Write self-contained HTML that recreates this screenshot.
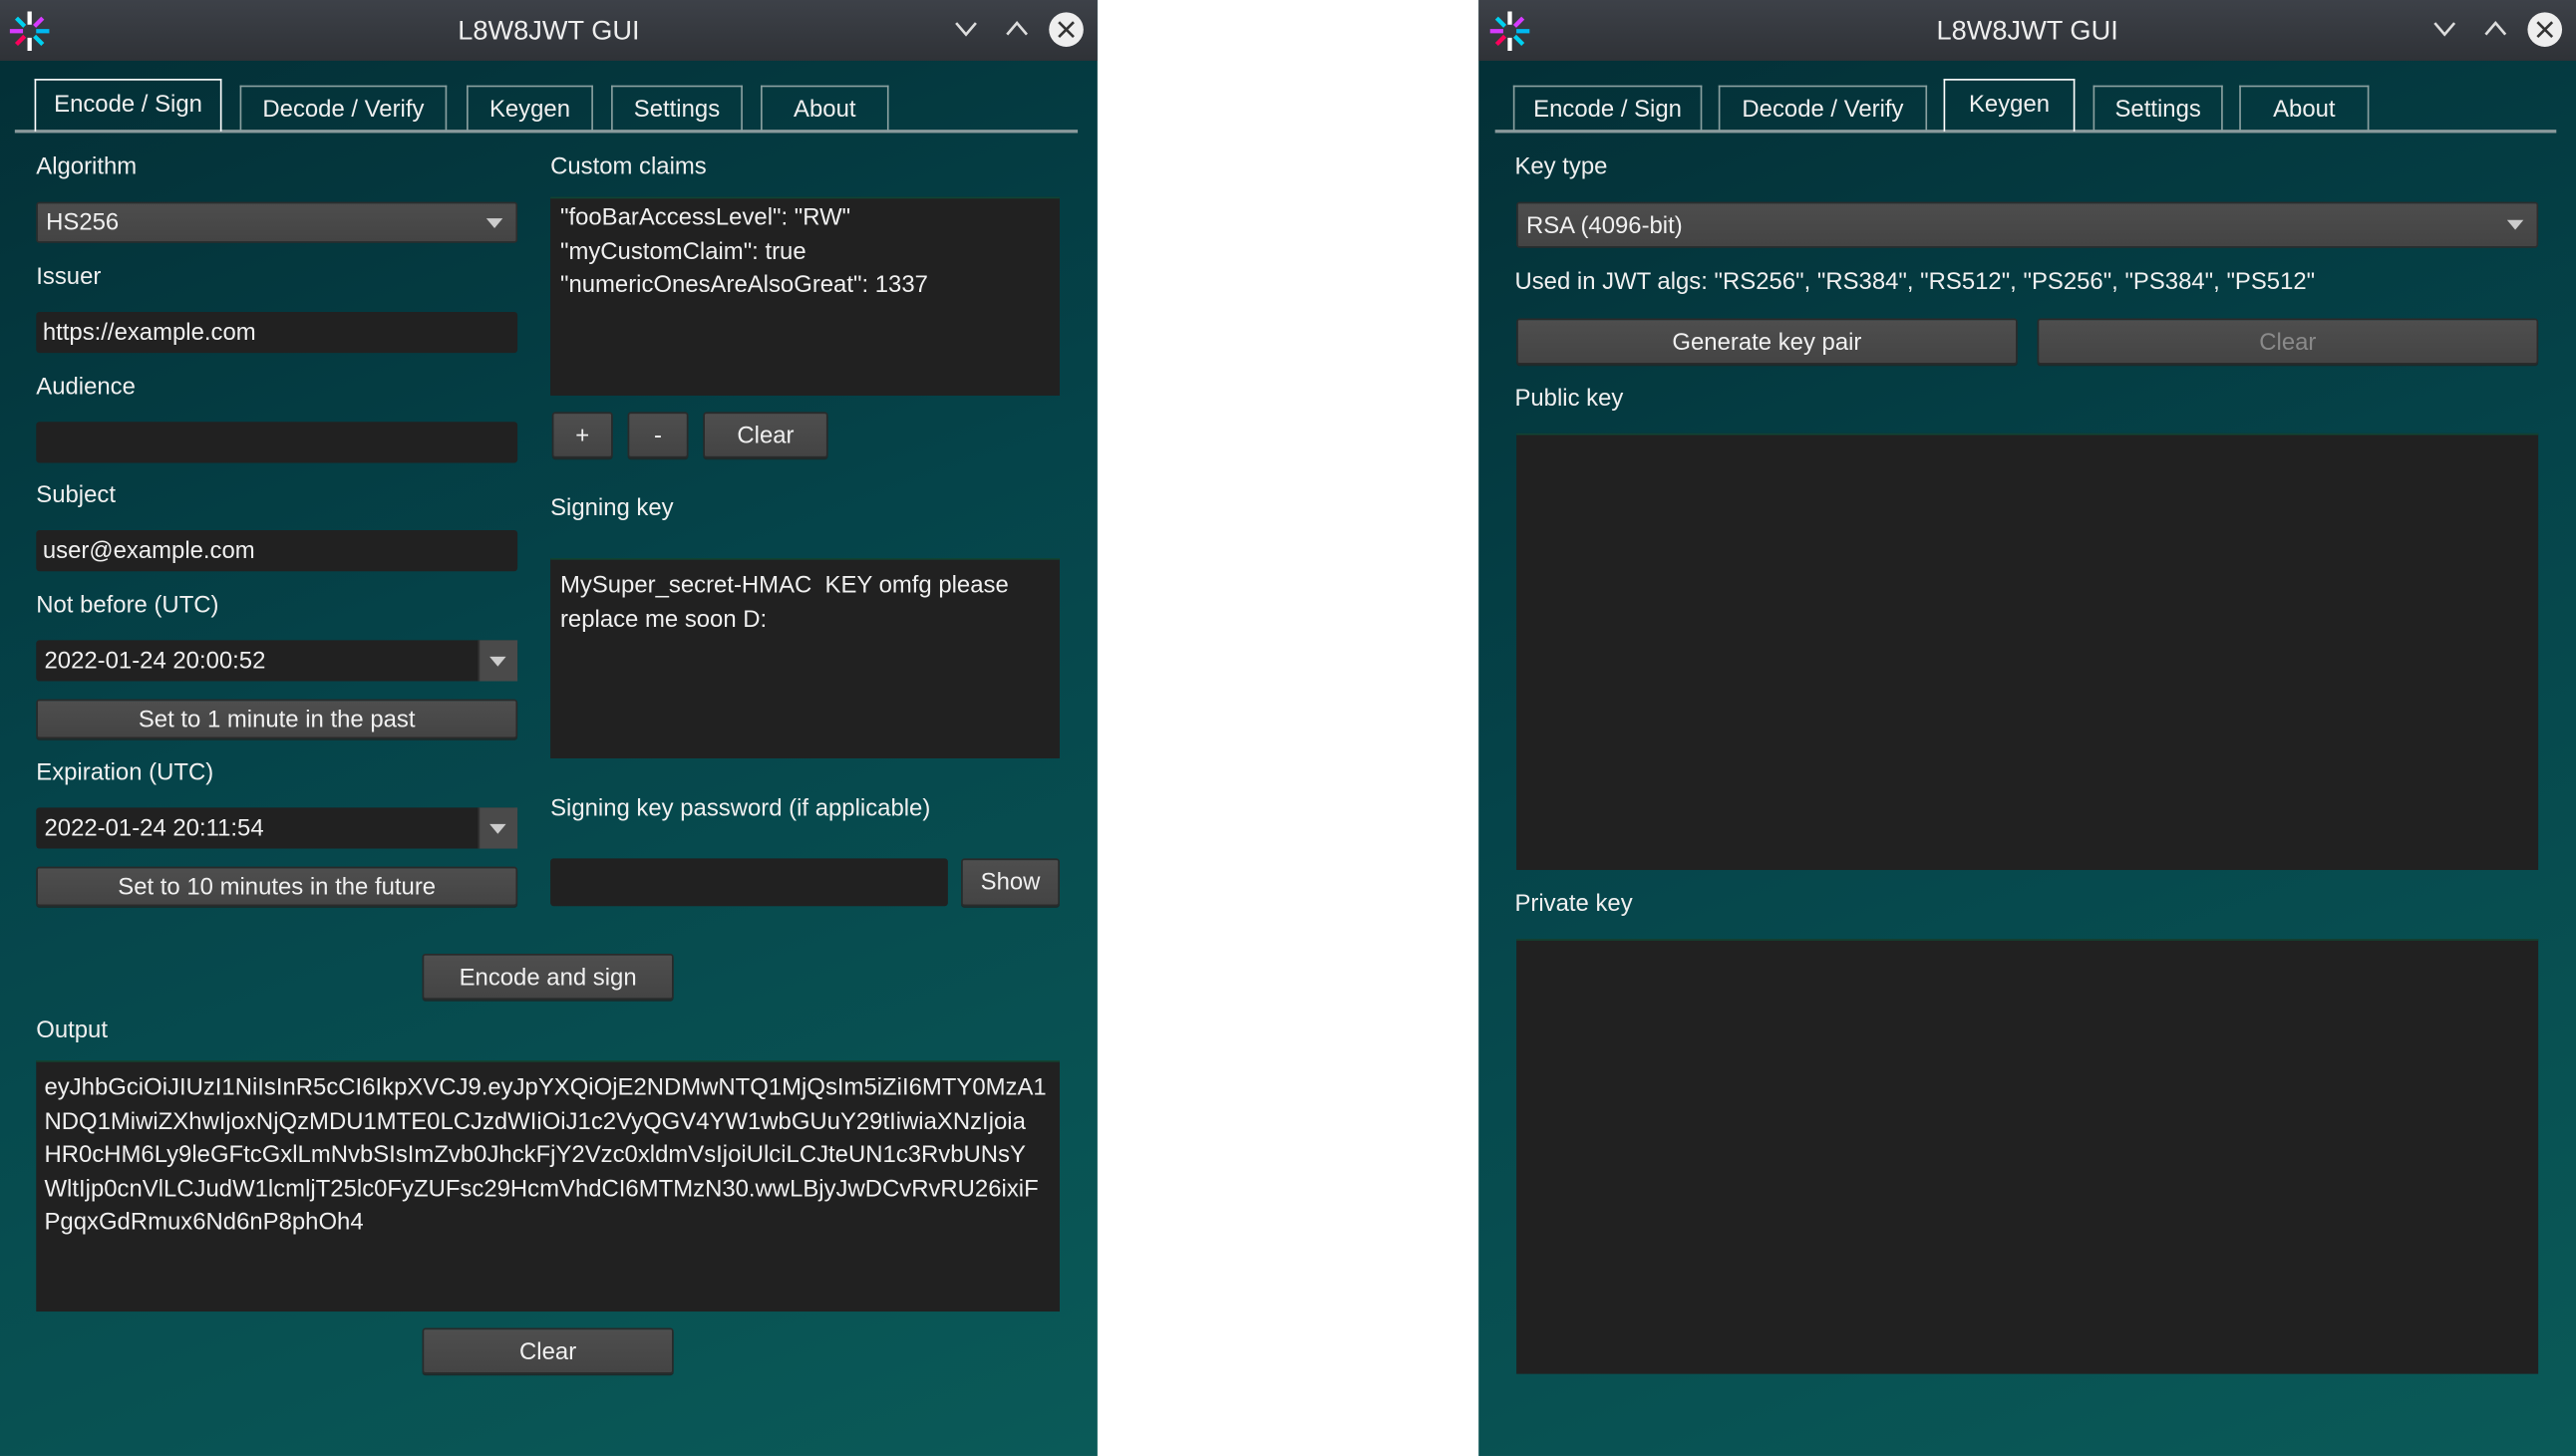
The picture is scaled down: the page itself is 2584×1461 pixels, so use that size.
<!DOCTYPE html>
<html><head><meta charset="utf-8"><style>
*{box-sizing:border-box;margin:0;padding:0}
html,body{width:2584px;height:1461px;overflow:hidden;background:#fff}
#s{position:absolute;left:0;top:0;width:1568px;height:887px;transform:scale(1.648,1.6471);transform-origin:0 0;font-family:"Liberation Sans","DejaVu Sans",sans-serif;font-size:14.5px;color:#f0f0f0}
.win{position:absolute;top:0;width:668px;height:887px;background:linear-gradient(160deg,#032e35 0%,#05444a 45%,#0a5a58 100%);overflow:hidden}
.tb{position:absolute;left:0;top:0;width:100%;height:37px;background:linear-gradient(#3d4148,#2f3237);text-align:center;line-height:38px;font-size:16.5px;color:#eee}
.a{position:absolute}
.tab{position:absolute;top:52px;height:28px;border:1px solid #8aa0a0;border-bottom:none;text-align:center;line-height:28px}
.tab.on{top:48px;height:32px;border:1.5px solid #fff;border-bottom:none;line-height:31px}
.line{position:absolute;top:79px;height:2px;background:#8a9a9c}
.lab{position:absolute;line-height:20px}
.in{position:absolute;background:#212121;border-radius:2px;padding-left:4px;line-height:26px}
.ta{position:absolute;background:#212121;border-top:1px solid #143;padding:6px 6px;line-height:20.5px}
.btn{position:absolute;background:linear-gradient(#4e4e4e,#444);border:1px solid #2a2a2a;border-radius:2px;text-align:center;box-shadow:0 1px 0 #1d2a2a;padding-top:1px}
.cb{position:absolute;background:linear-gradient(#4d4d4d,#444);border:1px solid #2d2d2d;border-radius:2px;padding-left:5px;padding-top:1px}
.arr{position:absolute;right:8px;top:50%;margin-top:-3px;width:0;height:0;border-left:5px solid transparent;border-right:5px solid transparent;border-top:6px solid #ccc}
.dd{position:absolute;right:0;top:0;bottom:0;width:24px;background:#4a4a4a;border-left:1px solid #333}
</style></head><body><div id="s">

<!-- Window 1 -->
<div class="win" style="left:0">
<div class="tb">L8W8JWT GUI</div>
<svg class="a" style="left:5px;top:6px" width="26" height="26" viewBox="0 0 26 26"><g stroke-width="2.6" stroke-linecap="butt"><line x1="13" y1="1" x2="13" y2="9" stroke="#fff"/><line x1="13" y1="17" x2="13" y2="25" stroke="#fff"/><line x1="5" y1="5" x2="10" y2="10" stroke="#00d1f0"/><line x1="21" y1="21" x2="16" y2="16" stroke="#00d1f0"/><line x1="21" y1="5" x2="16" y2="10" stroke="#d63aff"/><line x1="5" y1="21" x2="10" y2="16" stroke="#fb015b"/><line x1="1" y1="13" x2="9" y2="13" stroke="#d63aff"/><line x1="17" y1="13" x2="25" y2="13" stroke="#00b9f1"/></g></svg>
<svg class="a" style="left:580px;top:12px" width="16" height="12"><polyline points="2,2 8,9 14,2" fill="none" stroke="#ddd" stroke-width="1.6"/></svg>
<svg class="a" style="left:611px;top:11px" width="16" height="12"><polyline points="2,10 8,3 14,10" fill="none" stroke="#ddd" stroke-width="1.6"/></svg>
<svg class="a" style="left:638px;top:7px" width="22" height="22"><circle cx="11" cy="11" r="10.5" fill="#eee"/><path d="M6.5 6.5L15.5 15.5M15.5 6.5L6.5 15.5" stroke="#333" stroke-width="1.6"/></svg>
<div class="line" style="left:9px;width:647px"></div>
<div class="tab on" style="left:21px;width:114px">Encode / Sign</div>
<div class="tab" style="left:146px;width:126px">Decode / Verify</div>
<div class="tab" style="left:284px;width:77px">Keygen</div>
<div class="tab" style="left:372px;width:80px">Settings</div>
<div class="tab" style="left:463px;width:78px">About</div>

<div class="lab" style="left:22px;top:92px">Algorithm</div>
<div class="cb" style="left:22px;top:123px;width:293px;height:25px;line-height:23px">HS256<div class="arr"></div></div>
<div class="lab" style="left:22px;top:159px">Issuer</div>
<div class="in" style="left:22px;top:190px;width:293px;height:25px">https://example.com</div>
<div class="lab" style="left:22px;top:226px">Audience</div>
<div class="in" style="left:22px;top:257px;width:293px;height:25px"></div>
<div class="lab" style="left:22px;top:292px">Subject</div>
<div class="in" style="left:22px;top:323px;width:293px;height:25px">user@example.com</div>
<div class="lab" style="left:22px;top:359px">Not before (UTC)</div>
<div class="in" style="left:22px;top:390px;width:293px;height:25px;padding-left:5px">2022-01-24 20:00:52<div class="dd"><div class="arr" style="right:7px"></div></div></div>
<div class="btn" style="left:22px;top:426px;width:293px;height:24px;line-height:22px">Set to 1 minute in the past</div>
<div class="lab" style="left:22px;top:461px">Expiration (UTC)</div>
<div class="in" style="left:22px;top:492px;width:293px;height:25px;padding-left:5px">2022-01-24 20:11:54<div class="dd"><div class="arr" style="right:7px"></div></div></div>
<div class="btn" style="left:22px;top:528px;width:293px;height:24px;line-height:22px">Set to 10 minutes in the future</div>

<div class="lab" style="left:335px;top:92px">Custom claims</div>
<div class="ta" style="left:335px;top:120px;width:310px;height:121px;padding-top:2px">"fooBarAccessLevel": "RW"<br>"myCustomClaim": true<br>"numericOnesAreAlsoGreat": 1337</div>
<div class="btn" style="left:336px;top:251px;width:37px;height:28px;line-height:26px">+</div>
<div class="btn" style="left:382px;top:251px;width:37px;height:28px;line-height:26px">-</div>
<div class="btn" style="left:428px;top:251px;width:76px;height:28px;line-height:26px">Clear</div>
<div class="lab" style="left:335px;top:300px">Signing key</div>
<div class="ta" style="left:335px;top:340px;width:310px;height:122px;padding-top:6px">MySuper_secret-HMAC&nbsp; KEY omfg please replace me soon D:</div>
<div class="lab" style="left:335px;top:483px">Signing key password (if applicable)</div>
<div class="in" style="left:335px;top:523px;width:242px;height:29px"></div>
<div class="btn" style="left:585px;top:523px;width:60px;height:29px;line-height:27px">Show</div>

<div class="btn" style="left:257px;top:581px;width:153px;height:28px;line-height:26px">Encode and sign</div>
<div class="lab" style="left:22px;top:618px">Output</div>
<div class="ta" style="left:22px;top:646px;width:623px;height:153px;padding:6px 5px;white-space:nowrap;overflow:hidden">eyJhbGciOiJIUzI1NiIsInR5cCI6IkpXVCJ9.eyJpYXQiOjE2NDMwNTQ1MjQsIm5iZiI6MTY0MzA1<br>NDQ1MiwiZXhwIjoxNjQzMDU1MTE0LCJzdWIiOiJ1c2VyQGV4YW1wbGUuY29tIiwiaXNzIjoia<br>HR0cHM6Ly9leGFtcGxlLmNvbSIsImZvb0JhckFjY2Vzc0xldmVsIjoiUlciLCJteUN1c3RvbUNsY<br>WltIjp0cnVlLCJudW1lcmljT25lc0FyZUFsc29HcmVhdCI6MTMzN30.wwLBjyJwDCvRvRU26ixiF<br>PgqxGdRmux6Nd6nP8phOh4</div>
<div class="btn" style="left:257px;top:809px;width:153px;height:28px;line-height:26px">Clear</div>
</div>

<!-- Window 2 -->
<div class="win" style="left:900px">
<div class="tb">L8W8JWT GUI</div>
<svg class="a" style="left:6px;top:6px" width="26" height="26" viewBox="0 0 26 26"><g stroke-width="2.6"><line x1="13" y1="1" x2="13" y2="9" stroke="#fff"/><line x1="13" y1="17" x2="13" y2="25" stroke="#fff"/><line x1="5" y1="5" x2="10" y2="10" stroke="#00d1f0"/><line x1="21" y1="21" x2="16" y2="16" stroke="#00d1f0"/><line x1="21" y1="5" x2="16" y2="10" stroke="#d63aff"/><line x1="5" y1="21" x2="10" y2="16" stroke="#fb015b"/><line x1="1" y1="13" x2="9" y2="13" stroke="#d63aff"/><line x1="17" y1="13" x2="25" y2="13" stroke="#00b9f1"/></g></svg>
<svg class="a" style="left:580px;top:12px" width="16" height="12"><polyline points="2,2 8,9 14,2" fill="none" stroke="#ddd" stroke-width="1.6"/></svg>
<svg class="a" style="left:611px;top:11px" width="16" height="12"><polyline points="2,10 8,3 14,10" fill="none" stroke="#ddd" stroke-width="1.6"/></svg>
<svg class="a" style="left:638px;top:7px" width="22" height="22"><circle cx="11" cy="11" r="10.5" fill="#eee"/><path d="M6.5 6.5L15.5 15.5M15.5 6.5L6.5 15.5" stroke="#333" stroke-width="1.6"/></svg>
<div class="line" style="left:10px;width:646px"></div>
<div class="tab" style="left:21px;width:115px">Encode / Sign</div>
<div class="tab" style="left:146px;width:127px">Decode / Verify</div>
<div class="tab on" style="left:283px;width:80px">Keygen</div>
<div class="tab" style="left:374px;width:79px">Settings</div>
<div class="tab" style="left:463px;width:79px">About</div>

<div class="lab" style="left:22px;top:92px">Key type</div>
<div class="cb" style="left:23px;top:123px;width:622px;height:28px;line-height:26px">RSA (4096-bit)<div class="arr"></div></div>
<div class="lab" style="left:22px;top:162px">Used in JWT algs: "RS256", "RS384", "RS512", "PS256", "PS384", "PS512"</div>
<div class="btn" style="left:23px;top:194px;width:305px;height:28px;line-height:26px">Generate key pair</div>
<div class="btn" style="left:340px;top:194px;width:305px;height:28px;line-height:26px;color:#8a8a8a">Clear</div>
<div class="lab" style="left:22px;top:233px">Public key</div>
<div class="ta" style="left:23px;top:264px;width:622px;height:266px"></div>
<div class="lab" style="left:22px;top:541px">Private key</div>
<div class="ta" style="left:23px;top:572px;width:622px;height:265px"></div>
</div>
</div></body></html>
